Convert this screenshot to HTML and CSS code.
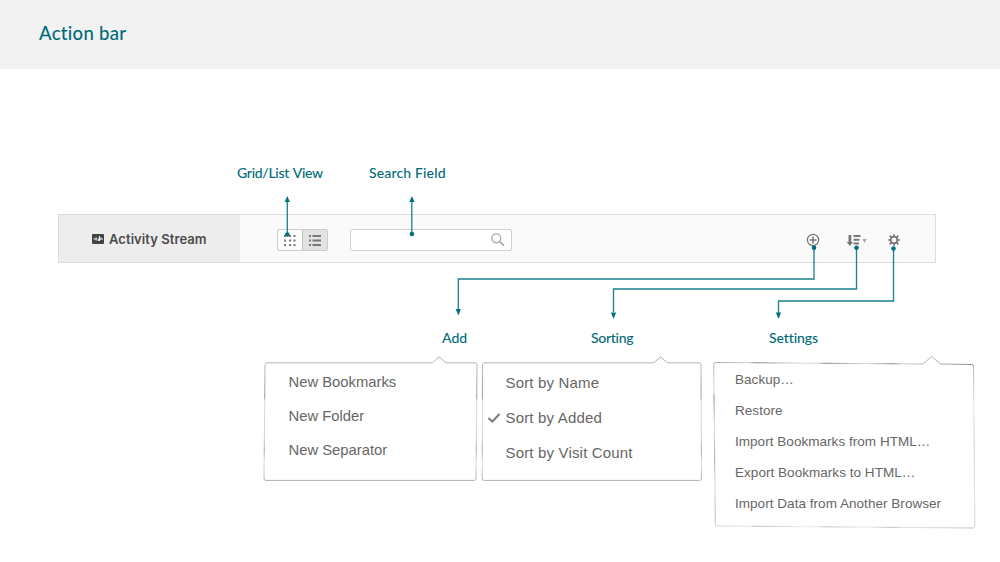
FILE: index.html
```html
<!DOCTYPE html>
<html lang="en">
<head>
<meta charset="utf-8">
<title>Action bar</title>
<link rel="stylesheet" href="styles.css">
</head>
<body>
<header class="page-header"><h1 class="page-title">Action bar</h1></header>
<main class="board">
  <div class="labels labels-top">
    <span class="label label-view">Grid/List View</span>
    <span class="label label-search">Search Field</span>
  </div>
  <section class="bar">
    <div class="bar-tab">
      <svg class="stream-icon" width="12" height="10" viewBox="0 0 12 10"><rect width="12" height="10" rx="1" fill="#444"/><path d="M1.500 5h2.200M4.200 3.500v3M6.300 4.500v2.500M7.500 2v5M8.800 3.500v2.500M9.500 5h1.500" stroke="#eee" stroke-width="1.100" fill="none"/></svg>
      <span class="tab-text">Activity Stream</span>
    </div>
    <div class="bar-tools">
      <div class="toggle">
        <span class="toggle-half"><svg width="12" height="11" viewBox="0 0 12 11" fill="#777"><path d="M0 0h2v2H0zM5 0h2v2H5zM9.500 0h2v2h-2zM0 4.500h2v2H0zM5 4.500h2v2H5zM9.500 4.500h2v2h-2zM0 9h2v2H0zM5 9h2v2H5zM9.500 9h2v2h-2z"/></svg></span>
        <span class="toggle-half toggle-on"><svg width="12" height="11" viewBox="0 0 12 11" fill="#777"><path d="M0 0h2v2H0zM3.500 0H12v2H3.500zM0 4.500h2v2H0zM3.500 4.500H12v2H3.500zM0 9h2v2H0zM3.500 9H12v2H3.500z"/></svg></span>
      </div>
      <div class="search"><svg width="14" height="14" viewBox="0 0 14 14" fill="none" stroke="#aaa"><circle cx="5.300" cy="5.300" r="4.400" stroke-width="1.400"/><path d="M8.600 8.600l4.400 4" stroke-width="1.900"/></svg></div>
      <div class="actions">
        <svg class="add-icon" width="14" height="14" viewBox="0 0 14 14" fill="none" stroke="#777"><circle cx="7" cy="7" r="5.600" stroke-width="1.200"/><path d="M7 3.600v6.800M3.600 7h6.800" stroke-width="1.500"/></svg>
        <svg class="sort-icon" width="20" height="13" viewBox="0 0 20 13" fill="#777"><path d="M1.500 1h2.800v7H6.200L2.900 12-.4 8h1.900zM6.500 1H13.500v2H6.500zM6.500 4.700H12.500v2H6.500zM6.500 8.600H12v2H6.500z"/><path d="M15.400 5h4.400l-2.200 4z" fill="#aaa"/></svg>
        <svg class="gear-icon" width="14" height="14" viewBox="0 0 14 14" fill="none" stroke="#777"><circle cx="7" cy="7" r="3.400" stroke-width="1.900"/><path d="M7 1.200v2.400M7 10.400v2.400M1.200 7h2.400M10.400 7h2.400M2.700 2.700l1.800 1.800M9.500 9.500l1.800 1.800M2.700 11.300l1.800-1.800M9.500 4.500l1.800-1.800" stroke-width="1.700"/></svg>
      </div>
    </div>
  </section>
  <div class="labels labels-bottom">
    <span class="label label-add">Add</span>
    <span class="label label-sort">Sorting</span>
    <span class="label label-settings">Settings</span>
  </div>
  <div class="menus">
    <ul class="menu menu-add">
      <svg class="outline" width="215" height="126" viewBox="0 0 215 126" fill="none"><defs><linearGradient id="edge" x1="0" y1="0" x2="0" y2="126" gradientUnits="userSpaceOnUse"><stop offset="0" stop-color="#aaa"/><stop offset=".1" stop-color="#bbb"/><stop offset=".33" stop-color="#999"/><stop offset=".36" stop-color="#ddd"/><stop offset=".65" stop-color="#d0d0d0"/><stop offset=".75" stop-color="#aaa"/><stop offset=".85" stop-color="#ddd"/><stop offset="1" stop-color="#aaa"/></linearGradient></defs><path d="M1 9.300q0-2.500 2-2.500H168.500l6.500-6 7 6h29q2 0 2 2L212 122.400q0 2-2 2H2q-2 0-2-2z" stroke="url(#edge)"/></svg>
      <li class="item">New Bookmarks</li><li class="item">New Folder</li><li class="item">New Separator</li>
    </ul>
    <ul class="menu menu-sort">
      <svg class="outline" width="221" height="126" viewBox="0 0 221 126" fill="none"><path d="M.5 9.300q0-2.500 2-2.500H172l6.500-6 7 6h31.500q2 0 2 2l.5 113.600q0 2-2 2H2.200q-2 0-2-2z" stroke="url(#edge)"/></svg>
      <li class="item">Sort by Name</li><li class="item item-checked"><svg class="check" width="14" height="12" viewBox="0 0 14 12" fill="none" stroke="#777" stroke-width="1.900"><path d="M1.500 6l3.700 3.700L12.500 2"/></svg>Sort by Added</li><li class="item">Sort by Visit Count</li>
    </ul>
    <ul class="menu menu-settings">
      <svg class="outline" width="264" height="174" viewBox="0 0 264 174" fill="none"><defs><linearGradient id="top" x1="0" y1="0" x2="262" y2="0" gradientUnits="userSpaceOnUse"><stop offset="0" stop-color="#aaa"/><stop offset=".13" stop-color="#ccc"/><stop offset=".16" stop-color="#888"/><stop offset=".34" stop-color="#ddd"/><stop offset=".4" stop-color="#ccc"/><stop offset=".42" stop-color="#888"/><stop offset=".58" stop-color="#ddd"/><stop offset=".68" stop-color="#888"/><stop offset=".72" stop-color="#ccc"/><stop offset=".94" stop-color="#999"/><stop offset="1" stop-color="#888"/></linearGradient><linearGradient id="side" x1="0" y1="0" x2="0" y2="172" gradientUnits="userSpaceOnUse"><stop offset="0" stop-color="#aaa"/><stop offset=".2" stop-color="#ddd"/><stop offset=".24" stop-color="#888"/><stop offset=".4" stop-color="#ddd"/><stop offset=".6" stop-color="#aaa"/><stop offset=".75" stop-color="#ddd"/><stop offset=".9" stop-color="#bbb"/><stop offset="1" stop-color="#ccc"/></linearGradient><linearGradient id="right" x1="0" y1="0" x2="0" y2="172" gradientUnits="userSpaceOnUse"><stop offset="0" stop-color="#aaa"/><stop offset=".3" stop-color="#e2e2e2"/><stop offset=".5" stop-color="#ccc"/><stop offset=".8" stop-color="#e2e2e2"/><stop offset="1" stop-color="#ccc"/></linearGradient></defs><path d="M-.3 8.500q0-2 2-2L209 8l8.500-7.500 9 7.500 31 .5q2 0 2 2" stroke="url(#top)"/><path d="M-.3 8.500L1.300 168q0 2 2 2" stroke="url(#side)"/><path d="M259.500 10.500l1.300 159q0 2-1.500 2" stroke="url(#right)"/><path d="M3.300 170l256 2" stroke="url(#top)" stroke-opacity=".55"/></svg>
      <li class="item">Backup…</li><li class="item">Restore</li><li class="item">Import Bookmarks from HTML…</li><li class="item">Export Bookmarks to HTML…</li><li class="item">Import Data from Another Browser</li>
    </ul>
  </div>
</main>
<svg class="connectors" width="1000" height="562" viewBox="0 0 1000 562" fill="none" stroke="#17818d" stroke-width="1.300">
  <path d="M287.300 234V201M411.800 234V201M814 248v31H458.300v31M856.500 248v41H613.500v23M893.500 248v53H778.500v12"/>
  <g fill="#00707c" stroke="none"><circle cx="287.300" cy="234.500" r="2.300"/><circle cx="411.900" cy="234" r="2.300"/><circle cx="814" cy="247.700" r="2.300"/><circle cx="856.500" cy="247.700" r="2.300"/><circle cx="893.500" cy="248.500" r="2.300"/><path d="M284.700 202h5.200l-2.600-6zM409.300 202h5.200l-2.600-6zM455.700 309h5.200l-2.600 6.500zM610.900 312.500h5.200l-2.600 6.500zM775.900 312.500h5.200l-2.600 6.500z"/></g>
</svg>
</body>
</html>
```
FILE: styles.css
```css
* { box-sizing: border-box; }
body { margin: 0; width: 1000px; height: 562px; overflow: hidden; background: #fff; color: #666; font-family: "Liberation Sans", Arial, sans-serif; }
.page-header { height: 69px; padding: 22px 39px 0; background: #f2f2f2; }
.page-title { margin: 0; color: #006b78; font: 500 18.500px/23px Lato, sans-serif; letter-spacing: .3px; }
.board { display: flex; flex-direction: column; }
.labels { display: flex; color: #006b78; font: 500 14px/18px Lato, sans-serif; font-variant-ligatures: none; white-space: nowrap; }
.labels-top { padding: 95px 0 0 237px; }
.label-view { width: 132px; letter-spacing: -.3px; word-spacing: 1px; }
.label-search { letter-spacing: .15px; }
.bar { display: flex; width: 878px; height: 49px; margin: 32px 0 0 58px; border: 1px solid #dcdede; background: #fafafa; }
.bar-tab { display: flex; align-items: center; gap: 5px; width: 181px; padding: 1px 0 0 33px; background: #ededed; color: #4b4b4b; font: 600 13px/18px Inter, sans-serif; letter-spacing: .07px; white-space: nowrap; }
.bar-tools { display: flex; flex: 1; align-items: center; padding: 3px 34px 0 37px; }
.toggle { display: flex; width: 51px; height: 22px; border: 1px solid #ccc; border-radius: 2px; background: #fdfdfd; overflow: hidden; }
.toggle-half { display: flex; flex: 1; align-items: center; justify-content: center; }
.toggle-on { border-left: 1px solid #c3c3c3; background: #e2e2e2; }
.search { display: flex; align-items: center; justify-content: flex-end; width: 162px; height: 22px; margin-left: 22px; padding-right: 6px; border: 1px solid #d0d0d0; border-radius: 2px; background: #fff; }
.actions { display: flex; align-items: center; margin-left: auto; }
.sort-icon { margin-left: 27px; overflow: visible; }
.gear-icon { margin-left: 20px; }
.labels-bottom { padding: 66px 0 0 442px; }
.label-add { width: 149px; }
.label-sort { width: 178px; letter-spacing: -.3px; }
.label-settings { letter-spacing: -.1px; }
.menus { display: flex; align-items: flex-start; padding: 9px 0 0 264px; }
.menu { position: relative; margin: 0; padding: 0; list-style: none; white-space: nowrap; }
.outline { position: absolute; top: 0; left: 0; overflow: visible; }
.item { position: relative; }
.menu-add { width: 218px; height: 126px; padding: 9px 0 0 24.500px; font-size: 14.800px; line-height: 34px; }
.menu-sort { width: 232px; height: 126px; padding: 9px 0 0 23.500px; font-size: 15px; line-height: 35px; letter-spacing: .17px; }
.check { position: absolute; left: -19px; top: 12px; }
.menu-settings { width: 264px; height: 174px; padding: 8px 0 0 21px; font-size: 13.500px; line-height: 31px; letter-spacing: .04px; }
.connectors { position: absolute; top: 0; left: 0; pointer-events: none; }
```
